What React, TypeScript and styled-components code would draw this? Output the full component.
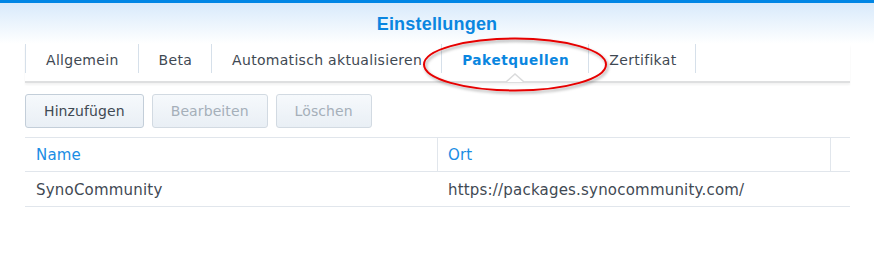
import React from "react";
import styled, { createGlobalStyle } from "styled-components";

const GlobalStyle = createGlobalStyle`
  html, body { margin: 0; padding: 0; background: #ffffff; }
  body { font-family: "DejaVu Sans", Verdana, sans-serif; color: #414b55; }
`;

const Page = styled.div`
  position: relative;
  width: 874px;
  height: 278px;
  overflow: hidden;
  background: #fff;
`;

const TopBar = styled.div`
  height: 3px;
  background: #0086e5;
`;

const Header = styled.div`
  height: 41px;
  background: linear-gradient(#d8eafb, #ffffff);
  display: flex;
  justify-content: center;
  align-items: center;
`;

const Title = styled.h1`
  margin: 0;
  font-family: "Liberation Sans", Arial, sans-serif;
  font-weight: bold;
  font-size: 18px;
  color: #0a86e0;
  letter-spacing: 0.2px;
  padding-top: 2px;
`;

const TabBar = styled.div`
  margin: 0 24px 0 25px;
  height: 37px;
  display: flex;
  align-items: flex-start;
  border-bottom: 2px solid #dedfe0;
  box-shadow: 0 2px 2px rgba(0, 0, 0, 0.05);
`;

const Tab = styled.div<{ $active?: boolean; $last?: boolean }>`
  position: relative;
  box-sizing: border-box;
  height: 29px;
  padding: 3px 19px 0 20px;
  display: flex;
  align-items: center;
  border-left: 1px solid #d6e0ea;
  border-right: ${(p) => (p.$last ? "1px solid #d6e0ea" : "none")};
  color: ${(p) => (p.$active ? "#0a86e0" : "#3f4953")};
  font-weight: ${(p) => (p.$active ? "bold" : "normal")};
  font-size: ${(p) => (p.$active ? "13.6px" : "14px")};
  letter-spacing: ${(p) => (p.$active ? "0.6px" : "0.3px")};
  white-space: nowrap;
`;

const Notch = styled.svg`
  position: absolute;
  left: 50%;
  top: 29px;
  margin-left: -9px;
`;

const Toolbar = styled.div`
  display: flex;
  gap: 8px;
  margin: 11px 0 0 25px;
`;

const Button = styled.button<{ $disabled?: boolean }>`
  height: 34px;
  padding: 0 18px;
  border-radius: 3px;
  border: 1px solid ${(p) => (p.$disabled ? "#d2dae2" : "#c3ced9")};
  background: linear-gradient(#f6f9fc, #e9eff5);
  font-family: "DejaVu Sans", Verdana, sans-serif;
  font-size: 14px;
  letter-spacing: 0.1px;
  color: ${(p) => (p.$disabled ? "#a5afb9" : "#3f4953")};
  cursor: default;
`;

const Table = styled.div`
  margin: 9px 24px 0 25px;
  border-top: 1px solid #e1e6ec;
  font-size: 15px;
  letter-spacing: 0.2px;
`;

const Row = styled.div<{ $head?: boolean }>`
  display: grid;
  grid-template-columns: 412px 393px 1fr;
  height: ${(p) => (p.$head ? "33px" : "34px")};
  border-bottom: 1px solid #e1e6ec;
`;

const Cell = styled.div<{ $head?: boolean; $sep?: boolean }>`
  display: flex;
  align-items: center;
  padding-left: ${(p) => (p.$sep ? "10px" : "11px")};
  padding-top: ${(p) => (p.$head ? "0" : "1px")};
  border-left: ${(p) => (p.$sep ? "1px solid #e1e6ec" : "none")};
  color: ${(p) => (p.$head ? "#1a8de4" : "#3f4953")};
  white-space: nowrap;
`;

const Annotation = styled.svg`
  position: absolute;
  left: 0;
  top: 0;
  pointer-events: none;
`;

const tabs = [
  "Allgemein",
  "Beta",
  "Automatisch aktualisieren",
  "Paketquellen",
  "Zertifikat",
];

export default function App() {
  return (
    <Page>
      <GlobalStyle />
      <TopBar />
      <Header>
        <Title>Einstellungen</Title>
      </Header>
      <TabBar>
        {tabs.map((t, i) => (
          <Tab key={t} $active={t === "Paketquellen"} $last={i === tabs.length - 1}>
            {t}
            {t === "Paketquellen" && (
              <Notch width="18" height="10" viewBox="0 0 18 10">
                <path d="M0 9 L9 1 L18 9 Z" fill="#ffffff" />
                <path d="M0 9 L9 1 L18 9" fill="none" stroke="#dadbdc" strokeWidth="1.5" />
              </Notch>
            )}
          </Tab>
        ))}
      </TabBar>
      <Toolbar>
        <Button>Hinzufügen</Button>
        <Button $disabled>Bearbeiten</Button>
        <Button $disabled>Löschen</Button>
      </Toolbar>
      <Table>
        <Row $head>
          <Cell $head>Name</Cell>
          <Cell $head $sep>Ort</Cell>
          <Cell $head $sep />
        </Row>
        <Row>
          <Cell>SynoCommunity</Cell>
          <Cell>https://packages.synocommunity.com/</Cell>
          <Cell />
        </Row>
      </Table>
      <Annotation width="874" height="278" viewBox="0 0 874 278">
        <defs>
          <filter id="sh" x="-10%" y="-30%" width="120%" height="160%">
            <feDropShadow dx="1.5" dy="2" stdDeviation="1.5" floodColor="#000" floodOpacity="0.35" />
          </filter>
        </defs>
        <ellipse cx="515" cy="64.5" rx="91" ry="26" fill="none" stroke="#e60000" strokeWidth="2" filter="url(#sh)" />
      </Annotation>
    </Page>
  );
}
